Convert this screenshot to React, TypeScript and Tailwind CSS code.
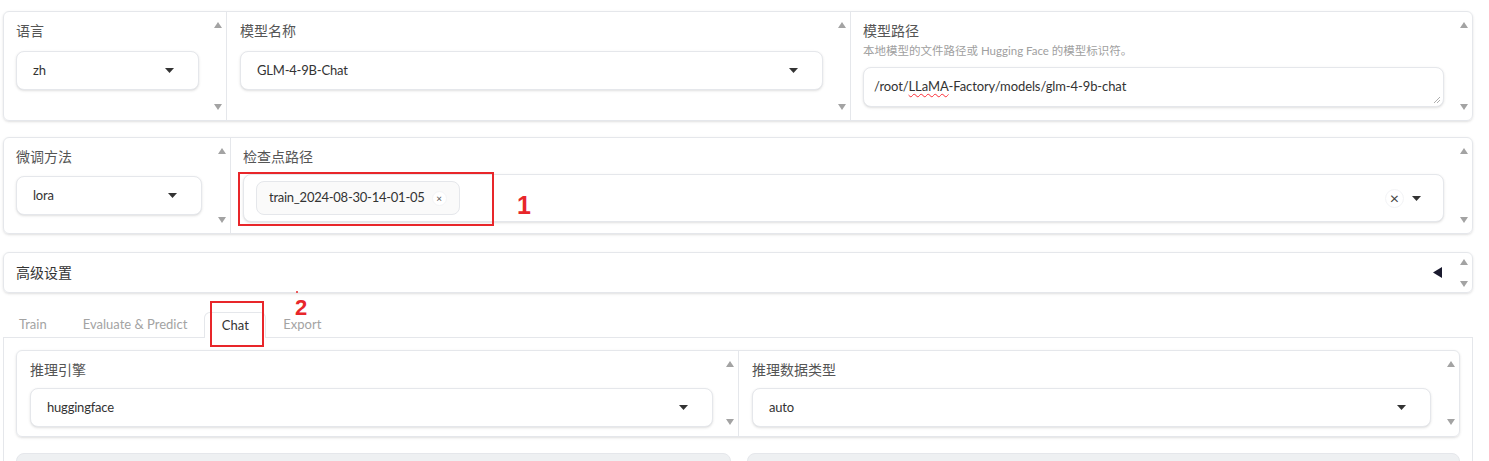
import React from 'react';

// ============================================================================
// LLaMA-Factory 网页界面 (Gradio 风格)
// ============================================================================

const ScrollUp = () => (
  <svg width="8" height="6" viewBox="0 0 8 6">
    <polygon points="0,6 4,0 8,6" fill="#a3a3a3" />
  </svg>
);

const ScrollDown = () => (
  <svg width="8" height="6" viewBox="0 0 8 6">
    <polygon points="0,0 8,0 4,6" fill="#a3a3a3" />
  </svg>
);

const Caret = () => (
  <svg width="9" height="5" viewBox="0 0 9 5">
    <polygon points="0,0 9,0 4.5,5" fill="#333" />
  </svg>
);

// 右侧的上下滚动箭头
const ScrollStrip = ({ className = '' }: { className?: string }) => (
  <div className={`w-4 flex flex-col items-center justify-between ${className}`}>
    <ScrollUp />
    <ScrollDown />
  </div>
);

const Label = ({ children }: { children: React.ReactNode }) => (
  <div className="text-[14px] leading-[18px] text-[#555]">{children}</div>
);

const Dropdown = ({ value, className = '' }: { value: string; className?: string }) => (
  <div
    className={`h-[39px] flex items-center justify-between bg-white border border-gray-200 rounded-lg shadow-sm pl-4 pr-6 ${className}`}
  >
    <span className="text-[13px] tracking-[-0.2px] text-[#333]">{value}</span>
    <Caret />
  </div>
);

const App: React.FC = () => {
  return (
    <div className="w-[1489px] h-[461px] overflow-hidden bg-white pl-[3px] pt-[11px] font-[Lato,'Noto_Sans_CJK_SC',sans-serif]">
      <div className="w-[1470px] flex flex-col">
        {/* 第一行：语言 / 模型名称 / 模型路径 */}
        <div className="h-[110px] flex border border-gray-200 rounded-md shadow-sm">
          <div className="w-[223px] flex border-r border-gray-200">
            <div className="flex-1 pl-3 pr-[11px] pt-[10px]">
              <Label>语言</Label>
              <Dropdown value="zh" className="mt-[11px]" />
            </div>
            <ScrollStrip className="py-[10px]" />
          </div>
          <div className="w-[624px] flex border-r border-gray-200">
            <div className="flex-1 pl-[13px] pr-[11px] pt-[10px]">
              <Label>模型名称</Label>
              <Dropdown value="GLM-4-9B-Chat" className="mt-[11px]" />
            </div>
            <ScrollStrip className="py-[10px]" />
          </div>
          <div className="flex-1 flex">
            <div className="flex-1 pl-3 pr-3 pt-[10px]">
              <Label>模型路径</Label>
              <div className="text-[11.5px] leading-[14px] text-[#a0a0a0] mt-[4px]">
                本地模型的文件路径或 Hugging Face 的模型标识符。
              </div>
              <div className="relative mt-[9px] h-[40px] flex items-center bg-white border border-gray-200 rounded-lg shadow-sm px-[10px]">
                <span className="text-[13px] tracking-[-0.1px] text-[#333]">
                  /root/
                  <span className="underline decoration-wavy decoration-red-500 decoration-1 underline-offset-2">LLaMA</span>
                  -Factory/models/glm-4-9b-chat
                </span>
                <svg className="absolute right-[3px] bottom-[3px]" width="7" height="7" viewBox="0 0 7 7">
                  <line x1="1" y1="7" x2="7" y2="1" stroke="#999" strokeWidth="0.8" />
                  <line x1="4" y1="7" x2="7" y2="4" stroke="#999" strokeWidth="0.8" />
                </svg>
              </div>
            </div>
            <ScrollStrip className="py-[10px]" />
          </div>
        </div>

        {/* 第二行：微调方法 / 检查点路径 */}
        <div className="mt-4 h-[97px] flex border border-gray-200 rounded-md shadow-sm">
          <div className="w-[227px] flex border-r border-gray-200">
            <div className="flex-1 pl-3 pr-3 pt-[10px]">
              <Label>微调方法</Label>
              <Dropdown value="lora" className="mt-[10px] h-[38px]" />
            </div>
            <ScrollStrip className="pt-[10px] pb-[10px]" />
          </div>
          <div className="flex-1 flex">
            <div className="flex-1 pl-3 pr-3 pt-[10px]">
              <Label>检查点路径</Label>
              <div className="relative mt-[8px] h-[48px] flex items-center bg-white border border-gray-200 rounded-lg shadow-sm pl-3 pr-[22px]">
                <div className="h-[34px] flex items-center gap-[7px] bg-[#fafafa] border border-gray-200 rounded-lg pl-3 pr-[12px]">
                  <span className="text-[13px] tracking-[-0.25px] text-[#333]">train_2024-08-30-14-01-05</span>
                  <span className="w-[15px] h-[15px] flex items-center justify-center rounded-full bg-white border border-gray-100 text-[10px] text-[#555] leading-none">
                    ×
                  </span>
                </div>
                <div className="ml-auto flex items-center gap-[8px]">
                  <span className="w-[19px] h-[19px] flex items-center justify-center rounded-full border border-gray-100 text-[16px] text-[#444] leading-none">
                    ×
                  </span>
                  <Caret />
                </div>
                {/* 标注 1 */}
                <div className="absolute left-[-6px] top-[-3px] w-[256px] h-[54px] border-2 border-[#e8262a] pointer-events-none" />
                <span className="absolute left-[273px] top-[18px] text-[25px] font-bold text-[#e8262a] leading-none font-['Liberation_Sans',sans-serif]">
                  1
                </span>
              </div>
            </div>
            <ScrollStrip className="pt-[10px] pb-[10px]" />
          </div>
        </div>

        {/* 高级设置 */}
        <div className="mt-[18px] h-[41px] flex items-center border border-gray-200 rounded-md shadow-sm pl-3">
          <span className="text-[14px] text-[#333]">高级设置</span>
          <svg className="ml-auto" width="9" height="11" viewBox="0 0 9 11">
            <polygon points="9,0 9,11 0,5.5" fill="#1a1a2e" />
          </svg>
          <ScrollStrip className="ml-[14px] h-[28px]" />
        </div>

        {/* 标签页 */}
        <div className="relative mt-[19px] h-[26px] flex items-end text-[13px] leading-[14px] border-b border-gray-200">
          <span className="pl-4 pb-[6px] text-[#a3a3a3]">Train</span>
          <span className="pl-[36px] pb-[6px] text-[#a3a3a3]">Evaluate &amp; Predict</span>
          <span className="ml-[17px] h-[26px] w-[62px] flex items-end justify-center pb-[6px] text-[#333] bg-white border border-b-0 border-gray-200 rounded-t-md -mb-px">
            Chat
          </span>
          <span className="pl-[17px] pb-[6px] text-[#a3a3a3]">Export</span>
          {/* 标注 2 */}
          <div className="absolute left-[207px] top-[-11px] w-[54px] h-[46px] border-2 border-[#e8262a] pointer-events-none" />
          <span className="absolute left-[292px] top-[-13px] h-[18px] text-[22px] font-bold text-[#e8262a] leading-[18px] font-['Liberation_Sans',sans-serif]">
            2
          </span>
          <span className="absolute left-[293px] top-[-21px] w-[2px] h-[2px] rounded-full bg-[#e8262a]" />
        </div>

        {/* Chat 标签内容 */}
        <div className="h-[200px] border-l border-r border-gray-200 px-3 pt-3">
          <div className="h-[87px] flex border border-gray-200 rounded-md shadow-sm">
            <div className="w-[722px] flex border-r border-gray-200">
              <div className="flex-1 pl-[13px] pr-[9px] pt-[10px]">
                <Label>推理引擎</Label>
                <Dropdown value="huggingface" className="mt-[9px]" />
              </div>
              <ScrollStrip className="pt-[10px] pb-[11px]" />
            </div>
            <div className="flex-1 flex">
              <div className="flex-1 pl-[13px] pr-[12px] pt-[10px]">
                <Label>推理数据类型</Label>
                <Dropdown value="auto" className="mt-[9px]" />
              </div>
              <ScrollStrip className="pt-[10px] pb-[11px]" />
            </div>
          </div>
          <div className="mt-4 flex gap-4">
            <div className="w-[715px] h-[40px] bg-[#eef0f2] border border-gray-200 rounded-t-lg" />
            <div className="flex-1 h-[40px] bg-[#eef0f2] border border-gray-200 rounded-t-lg" />
          </div>
        </div>
      </div>
    </div>
  );
};

export default App;
